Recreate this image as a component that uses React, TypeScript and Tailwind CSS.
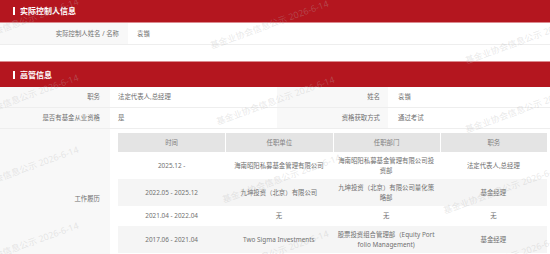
const marks: [number, number][] = [
  [-38, 48], [-38, 124], [-38, 196], [-38, 272],
  [212, 50], [218, 126], [224, 204], [212, 280],
  [467, 65], [467, 134], [445, 215], [445, 285],
];

const history = [
  ["2025.12 -", "海南昭阳私募基金管理有限公司", "海南昭阳私募基金管理有限公司投资部", "法定代表人,总经理"],
  ["2022.05 - 2025.12", "九坤投资（北京）有限公司", "九坤投资（北京）有限公司量化策略部", "基金经理"],
  ["2021.04 - 2022.04", "无", "无", "无"],
  ["2017.06 - 2021.04", "Two Sigma Investments", "股票投资组合管理部（Equity Portfolio Management)", "基金经理"],
];

function SectionHeader({ title }: { title: string }) {
  return (
    <div className="flex items-center h-full bg-[#b4161f] pl-[13px]">
      <span className="w-[2px] h-[8px] bg-white mr-[5px]" />
      <span className="text-white font-bold text-[8px]">{title}</span>
    </div>
  );
}

export default function App() {
  return (
    <div className="relative w-[550px] h-[254px] overflow-hidden bg-white text-[6.4px] leading-[9.5px] text-[#707070] font-['Noto_Sans','Noto_Sans_CJK_SC',sans-serif]">
      <div className="h-[23px] border-b border-[#dc8a8f]">
        <SectionHeader title="实际控制人信息" />
      </div>
      <div className="flex h-[22px] border-b border-[#eeeeee]">
        <div className="w-[128px] bg-[#f8f8f8] flex items-center justify-end pr-[9px]">实际控制人姓名 / 名称</div>
        <div className="flex items-center pl-[9px]">袁锴</div>
      </div>
      <div className="h-[16px]" />
      <div className="h-[26px] border-t border-[#dc8a8f]">
        <SectionHeader title="高管信息" />
      </div>

      <div className="grid grid-cols-[110px_167px_111px_1fr]">
        <div className="h-[21px] border-b border-[#eeeeee] bg-[#f8f8f8] flex items-center justify-end pr-[10px]">职务</div>
        <div className="h-[21px] border-b border-[#eeeeee] flex items-center pl-[8px]">法定代表人,总经理</div>
        <div className="h-[21px] border-b border-[#eeeeee] bg-[#f8f8f8] flex items-center justify-end pr-[8px]">姓名</div>
        <div className="h-[21px] border-b border-[#eeeeee] flex items-center pl-[10px]">袁锴</div>

        <div className="h-[21px] border-b border-[#eeeeee] bg-[#f8f8f8] flex items-center justify-end pr-[10px]">是否有基金从业资格</div>
        <div className="h-[21px] border-b border-[#eeeeee] flex items-center pl-[8px]">是</div>
        <div className="h-[21px] border-b border-[#eeeeee] bg-[#f8f8f8] flex items-center justify-end pr-[8px]">资格获取方式</div>
        <div className="h-[21px] border-b border-[#eeeeee] flex items-center pl-[10px]">通过考试</div>

        <div className="bg-[#f8f8f8] flex items-center justify-end pr-[10px] h-[140px]">工作履历</div>
        <div className="col-span-3 pt-[4px] pl-[8px]">
          <div className="grid grid-cols-4 w-[429px] text-center">
            {["时间", "任职单位", "任职部门", "职务"].map((h, i) => (
              <div
                key={h}
                className={`h-[19px] bg-[#e4e4e4] flex items-center justify-center text-[#808080] ${i > 0 ? "border-l border-white" : ""}`}
              >
                {h}
              </div>
            ))}
            {history.map((row, r) =>
              row.map((cell, c) => (
                <div
                  key={`${r}-${c}`}
                  className={`min-h-[20px] py-[4px] px-[5px] flex items-center justify-center break-all ${r % 2 === 1 ? "bg-[#f5f5f5]" : "bg-white"}`}
                >
                  {cell}
                </div>
              ))
            )}
          </div>
        </div>
      </div>

      <div className="absolute inset-0 pointer-events-none">
        {marks.map(([x, y], i) => (
          <div
            key={i}
            className="absolute whitespace-nowrap text-[9px] leading-none text-[rgba(180,180,180,0.3)] origin-bottom-left -rotate-[20deg]"
            style={{ left: x, top: y - 9 }}
          >
            基金业协会信息公示 2026-6-14
          </div>
        ))}
      </div>
    </div>
  );
}
